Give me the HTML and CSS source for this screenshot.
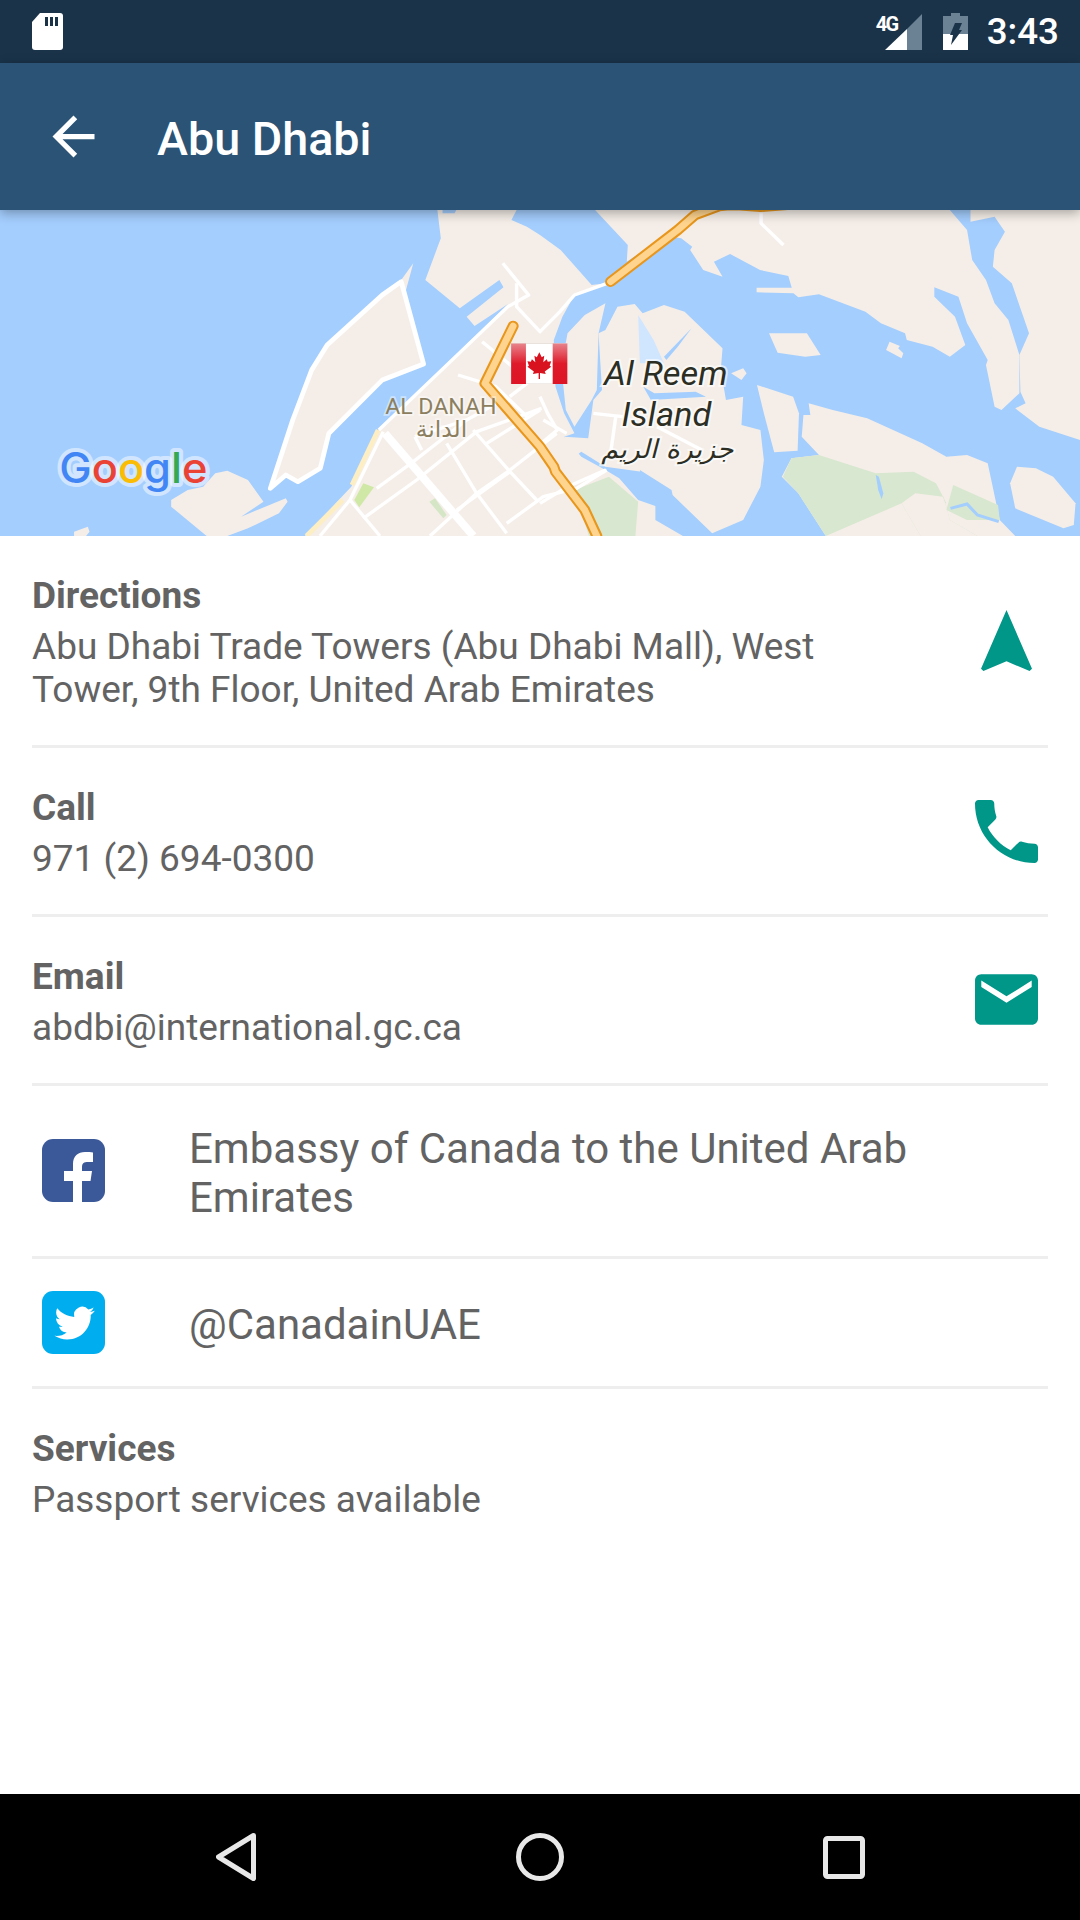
FILE: index.html
```html
<!DOCTYPE html>
<html lang="en">
<head>
<meta charset="utf-8">
<title>Abu Dhabi</title>
<link rel="stylesheet" href="styles.css">
</head>
<body>
<div class="statusbar">
  <svg class="sd" viewBox="0 0 31 37"><path fill="#fff" d="M8 0H28a3 3 0 0 1 3 3V34a3 3 0 0 1-3 3H3a3 3 0 0 1-3-3V9z"/><path fill="#1a3349" d="M13 4h3v9h-3zM18 4h3v9h-3zM23 4h3v9h-3z"/></svg>
  <div class="status-right">
    <div class="signal">
      <span class="net">4G</span>
      <svg class="signal-icon" viewBox="0 0 37 36"><path fill="#6b8194" d="M37 0V36H22V15z"/><path fill="#fff" d="M22 15V36H0z"/></svg>
    </div>
    <svg class="battery" viewBox="0 0 25 37"><path fill="#6b8194" d="M8 0h9v3h8V21H0V3h8z"/><path fill="#fff" d="M0 21H25V37H0z"/><path fill="#1a3349" d="M12 10h7l-3 7h3L8 32l2-10H7z"/></svg>
    <span class="clock">3:43</span>
  </div>
</div>
<header class="appbar">
  <svg class="back" viewBox="0 0 24 24"><path fill="#fff" d="M20 11H7.830l5.590-5.590L12 4l-8 8 8 8 1.410-1.410L7.830 13H20v-2z"/></svg>
  <h1 class="title">Abu Dhabi</h1>
</header>

<svg class="map" viewBox="0 30 3136 978" preserveAspectRatio="none">
  <rect class="water" x="0" y="0" width="3136" height="1008"/>
  <!-- mainland -->
  <polygon class="land" points="1270,30 1280,115 1235,240 1335,325 1450,240 1462,262 1355,350 1378,378 1475,312 1100,690 1020,860 885,1008 1983,1008 1903,960 1903,918 1853,900 1798,835 1758,810 1688,770 1638,710 1668,700 1638,640 1613,560 1608,420 1633,350 1668,285 1763,250 1718,255 1628,150 1568,105 1530,80 1485,60 1500,30 1325,30 1320,40 1285,40 1285,30"/>
  <polygon class="land" points="497,900 545,870 590,860 625,820 660,812 720,840 765,905 700,950 830,895 835,905 810,940 720,985 660,1008 600,1008 497,920"/>
  <polygon class="land" points="215,995 255,980 260,995 250,1008 215,1008"/>
  <polygon class="land" points="1728,30 1823,135 1820,185 1968,85 2008,30"/>
  <polygon class="land" points="1873,30 1948,110 1978,115 2010,140 2004,150 2042,210 2098,230 2073,185 2120,162 2207,210 2289,228 2299,263 2197,263 2197,277 2304,280 2318,292 2378,283 2513,335 2558,370 2628,400 2633,420 2708,440 2758,470 2803,435 2773,350 2713,290 2713,262 2783,290 2808,370 2868,480 2863,495 2888,620 2908,630 2960,580 2960,465 2928,360 2888,310 2863,240 2823,180 2808,90 2758,30"/>
  <polygon class="land" points="2818,30 2818,65 2888,50 2918,95 2888,150 2883,200 2938,250 2988,400 2960,465 2963,575 2978,610 2948,625 3018,680 3136,720 3136,30"/>
  <polygon class="land" points="2233,400 2343,400 2383,465 2338,470 2258,458"/>
  <polygon class="land" points="2583,425 2613,438 2608,445 2623,460 2618,475 2573,450"/>
  <polygon class="land" points="2198,555 2303,590 2320,640 2316,752 2248,757 2218,640"/>
  <polygon class="land" points="2348,610 2418,630 2518,655 2678,730 2748,770 2808,765 2868,790 2903,960 2948,1008 2398,1008 2318,880 2270,830 2298,775 2378,765 2328,710 2333,645 2353,645"/>
  <polygon class="land" points="2933,850 2953,800 3008,805 3058,830 3123,910 3118,975 3088,985 2948,925"/>
  <!-- Reem -->
  <polygon class="land" points="1698,345 1758,310 1738,400 1733,570 1718,600 1668,680 1643,630 1630,500 1648,400"/>
  <polygon class="land" points="1793,320 1843,312 1866,340 1928,315 1988,335 2098,445 2093,510 2108,600 2158,590 2153,675 2208,690 2218,780 2208,860 2158,960 2068,1000 1998,930 1953,885 1863,815 1758,800 1688,755 1668,770 1638,710 1708,715 1723,600 1748,570 1738,400 1758,390"/>
  <polygon class="lagoon" points="1853,345 1898,420 1928,490 1858,490"/>
  <polygon class="water" points="1928,470 2008,385 1968,440 1935,480"/>
  <polygon class="water" points="1868,560 1890,600 2050,590 2020,575 1900,580"/>
  <polygon class="land" points="2123,520 2158,505 2168,520 2153,540"/>
  <polygon class="water" points="1858,810 1950,870 1953,885 1938,885 1860,830"/>
  <!-- parks -->
  <polygon class="park" points="2273,830 2298,775 2378,765 2543,820 2653,815 2718,850 2748,910 2618,910 2658,880 2740,890 2758,960 2838,1008 2673,1008 2618,910 2398,1008 2318,880"/>
  <polygon class="land" points="2618,910 2658,880 2738,890 2748,920 2758,960 2838,1008 2673,1008"/>
  <polygon class="park" points="2748,930 2768,855 2898,915 2903,960 2808,960"/>
  <polygon class="water" points="2543,825 2552,830 2565,880 2560,898 2550,870"/>
  <polyline class="thin-water" points="2760,925 2808,912 2838,945 2900,965"/>
  <polygon class="park" points="1668,870 1768,830 1853,905 1845,1008 1710,1008"/>
  <!-- peninsula -->
  <polygon class="pen-tip" points="1165,240 1200,190 1175,285"/>
  <polygon class="peninsula" points="785,865 830,825 865,845 930,805 955,700 1110,540 1230,492 1165,245 1110,285 950,435 905,510 850,660"/>
  <!-- beach -->
  <polyline class="beach" points="1098,690 1022,855"/>
  <polyline class="beach" points="995,900 890,1008"/>
  <!-- upper roads -->
  <g class="road-thin">
    <polyline points="1100,690 1475,320 1535,285 1460,190"/>
    <polyline points="1500,250 1500,320 1568,395 1626,335 1668,285 1763,250"/>
    <polyline points="1400,425 1500,510"/>
    <polyline points="1330,525 1440,560 1530,650"/>
    <polyline points="1480,590 1568,520"/>
    <polyline points="1568,590 1590,640 1618,690 1560,740"/>
    <polyline points="1723,640 1808,650"/>
    <polyline points="1788,650 1773,760"/>
    <polyline points="1908,680 2038,750"/>
    <polyline points="1568,910 1648,860 1758,810"/>
    <polyline points="2210,40 2210,70 2275,135"/>
  </g>
  <!-- streets, drawn from the lower crop -->
  <g transform="translate(871 600) scale(.968 1)">
    <polygon class="park-bright" points="190,250 222,262 178,322 163,300"/>
    <polygon class="park-pale" points="388,305 405,295 440,345 430,355"/>
    <g class="road-thin">
      <polyline points="230,265 340,185 500,60 590,10"/>
      <polyline points="190,355 350,240 530,95 725,25"/>
      <polyline points="390,408 530,280 630,210 770,100"/>
      <polyline points="560,130 720,30"/>
      <polyline points="620,370 730,290 830,265 920,210"/>
      <polyline points="470,330 630,215"/>
      <polyline points="345,110 365,150"/>
      <polyline points="440,130 530,280 620,400"/>
      <polyline points="520,90 630,215 710,300"/>
      <polyline points="150,300 240,408"/>
      <polyline points="250,95 150,300 60,408"/>
      <polyline points="345,110 500,60"/>
      <polyline points="730,60 800,100"/>
    </g>
    <polyline class="road-wide" points="255,100 520,408"/>
  </g>
  <!-- motorway -->
  <polyline class="mway-o" points="1490,378 1408,550 1568,740 1608,800 1613,815 1698,930 1733,1008"/>
  <polyline class="mway-i" points="1490,378 1408,550 1568,740 1608,800 1613,815 1698,930 1733,1008"/>
  <polyline class="mway-o" points="1773,245 1968,90 2018,45 2088,18 2128,14 2208,20 2288,14"/>
  <polyline class="mway-i" points="1773,245 1968,90 2018,45 2088,18 2128,14 2208,20 2288,14"/>
  <!-- labels -->
  <text class="lbl-area" x="1280" y="642">AL DANAH</text>
  <text class="lbl-area-ar" x="1282" y="712">الدانة</text>
  <text class="lbl-isl" x="1933" y="555">Al Reem</text>
  <text class="lbl-isl" x="1935" y="677">Island</text>
  <text class="lbl-isl-ar" x="1938" y="775">جزيرة الريم</text>
  <text class="logo" x="172" y="850"><tspan class="g-b">G</tspan><tspan class="g-r">o</tspan><tspan class="g-y">o</tspan><tspan class="g-b">g</tspan><tspan class="g-g">l</tspan><tspan class="g-r">e</tspan></text>
  <!-- flag -->
  <svg x="1484" y="430" width="164" height="122" viewBox="0 0 57 41" preserveAspectRatio="none">
    <defs><linearGradient id="fl" x1="0" y1="0" x2="0" y2="1"><stop offset="0" stop-color="#e8848c"/><stop offset=".5" stop-color="#df1a2a"/><stop offset="1" stop-color="#dd1425"/></linearGradient></defs>
    <rect width="57" height="41" fill="#fff" stroke="#d9cfc9" stroke-width=".8"/>
    <rect width="15" height="41" fill="url(#fl)"/>
    <rect x="42" width="15" height="41" fill="url(#fl)"/>
    <polygon fill="#d8121f" points="28.500,9 31,14 33.500,12.500 32.500,19 36,16 37,18.500 40.500,18 39,22.500 40.500,23.500 34,28.500 35,31 29.200,30 29.200,36 27.800,36 27.800,30 22,31 23,28.500 16.500,23.500 18,22.500 16.500,18 20,18.500 21,16 24.500,19 23.500,12.500 26,14"/>
  </svg>
</svg>

<main class="content">
  <section class="row row-first">
    <div class="text">
      <div class="label">Directions</div>
      <div class="value">Abu Dhabi Trade Towers (Abu Dhabi Mall), West<br>Tower, 9th Floor, United Arab Emirates</div>
    </div>
    <div class="action"><svg class="ic-nav" viewBox="4.500 2 15 19" preserveAspectRatio="none"><path fill="#009688" d="M12 2 4.500 20.290l.71.71L12 18l6.790 3 .71-.71z"/></svg></div>
  </section>
  <section class="row">
    <div class="text">
      <div class="label">Call</div>
      <div class="value">971 (2) 694-0300</div>
    </div>
    <div class="action"><svg class="ic-call" viewBox="3 3 18 18"><path fill="#009688" d="M6.620 10.790c1.440 2.830 3.760 5.140 6.590 6.590l2.200-2.200c.27-.27.67-.36 1.020-.24 1.120.37 2.330.57 3.570.57.55 0 1 .45 1 1V20c0 .55-.45 1-1 1-9.390 0-17-7.610-17-17 0-.55.45-1 1-1h3.500c.55 0 1 .45 1 1 0 1.250.2 2.450.57 3.570.11.35.03.74-.25 1.020l-2.200 2.200z"/></svg></div>
  </section>
  <section class="row">
    <div class="text">
      <div class="label">Email</div>
      <div class="value">abdbi@international.gc.ca</div>
    </div>
    <div class="action"><svg class="ic-mail" viewBox="2 4 20 16"><path fill="#009688" d="M20 4H4c-1.100 0-1.990.9-1.990 2L2 18c0 1.100.9 2 2 2h16c1.100 0 2-.9 2-2V6c0-1.100-.9-2-2-2zm0 4-8 5-8-5V6l8 5 8-5v2z"/></svg></div>
  </section>
  <section class="row row-social row-fb">
    <div class="social">
      <svg class="ic-social" viewBox="0 0 63 63"><rect width="63" height="63" rx="11" fill="#3b5998"/><path fill="#fff" d="M31 63V42H22V32H31V25C31 17 36 13 43 13C46 13 49 13 51 13.500V23H46C42 23 40 24 40 28V32H50L48.500 42H40V63Z"/></svg>
    </div>
    <div class="social-text">Embassy of Canada to the United Arab Emirates</div>
  </section>
  <section class="row row-social row-tw">
    <div class="social">
      <svg class="ic-social" viewBox="0 0 63 63"><rect width="63" height="63" rx="11" fill="#00aeef"/><path transform="translate(12.500 12) scale(1.680)" fill="#fff" d="M23.953 4.570a10 10 0 0 1-2.825.775 4.958 4.958 0 0 0 2.163-2.723c-.951.555-2.005.959-3.127 1.184a4.920 4.920 0 0 0-8.384 4.482C7.690 8.095 4.067 6.130 1.640 3.162a4.822 4.822 0 0 0-.666 2.475c0 1.710.87 3.213 2.188 4.096a4.904 4.904 0 0 1-2.228-.616v.06a4.923 4.923 0 0 0 3.946 4.827 4.996 4.996 0 0 1-2.212.085 4.936 4.936 0 0 0 4.604 3.417 9.867 9.867 0 0 1-6.102 2.105c-.39 0-.779-.023-1.170-.067a13.995 13.995 0 0 0 7.557 2.209c9.053 0 13.998-7.496 13.998-13.985 0-.21 0-.42-.015-.63A9.935 9.935 0 0 0 24 4.590z"/></svg>
    </div>
    <div class="social-text">@CanadainUAE</div>
  </section>
  <section class="row row-last">
    <div class="text">
      <div class="label">Services</div>
      <div class="value">Passport services available</div>
    </div>
  </section>
</main>

<nav class="navbar">
  <svg class="nav-back" viewBox="0 0 40 48"><path d="M37.500 2.500 2.500 24l35 21.500z"/></svg>
  <svg class="nav-home" viewBox="0 0 48 48"><circle cx="24" cy="24" r="21.500"/></svg>
  <svg class="nav-recent" viewBox="0 0 42 43"><rect x="2.500" y="2.500" width="37" height="38" rx="2"/></svg>
</nav>
</body>
</html>
```

FILE: styles.css
```css
* { box-sizing: border-box; }
html, body { margin: 0; padding: 0; }
body {
  width: 1080px;
  height: 1920px;
  display: flex;
  flex-direction: column;
  background: #fff;
  font-family: Roboto, "Noto Sans", sans-serif;
  color: #636363;
  overflow: hidden;
}
svg { display: block; flex: none; }

.statusbar {
  height: 63px;
  flex: none;
  background: #1a3349;
  display: flex;
  align-items: center;
  justify-content: space-between;
  padding: 0 21px 0 32px;
  color: #fff;
}
.sd { width: 31px; height: 37px; }
.status-right { display: flex; align-items: center; }
.signal { position: relative; width: 37px; height: 36px; margin-right: 21px; }
.signal-icon { width: 37px; height: 36px; }
.net {
  position: absolute;
  left: -9px;
  top: 0;
  font-size: 20px;
  line-height: 20px;
  font-weight: 700;
  letter-spacing: -1.5px;
}
.battery { width: 25px; height: 37px; margin-right: 19px; }
.clock { font-size: 36.750px; font-weight: 500; line-height: 43px; }

.appbar {
  height: 147px;
  flex: none;
  background: #2a5376;
  display: flex;
  align-items: center;
  padding-left: 42px;
  gap: 52px;
  position: relative;
  z-index: 2;
  box-shadow: 0 3px 11px rgba(0, 0, 0, .32);
}
.back { width: 63px; height: 63px; }
.title { margin: 4px 0 0; font-size: 46.700px; font-weight: 500; color: #fff; line-height: 56px; }

.map { width: 1080px; height: 326px; flex: none; }
.water { fill: #a4cefe; }
.land { fill: #f5eee8; }
.lagoon { fill: #d0e6ff; }
.park { fill: #d8e7cf; }
.park-bright { fill: #cfe8a6; }
.park-pale { fill: #d5e6c6; }
.pen-tip { fill: #f5eee8; }
.peninsula { fill: #f5eee8; stroke: #fff; stroke-width: 14; stroke-linejoin: round; }
.beach { fill: none; stroke: #fdeec4; stroke-width: 14; }
.thin-water { fill: none; stroke: #a4cefe; stroke-width: 9; }
.road-thin polyline { fill: none; stroke: #fff; stroke-width: 10; stroke-linejoin: round; }
.road-wide { fill: none; stroke: #fff; stroke-width: 24; }
.mway-o { fill: none; stroke: #e8961c; stroke-width: 32; stroke-linecap: round; stroke-linejoin: round; }
.mway-i { fill: none; stroke: #fed48f; stroke-width: 20; stroke-linecap: round; stroke-linejoin: round; }

.lbl-area, .lbl-area-ar {
  fill: #8c7f60;
  text-anchor: middle;
  paint-order: stroke;
  stroke: rgba(255, 255, 255, .45);
  stroke-width: 10;
}
.lbl-area { font-size: 67px; font-family: Roboto, sans-serif; }
.lbl-area-ar { font-size: 68px; font-family: "DejaVu Sans", sans-serif; }
.lbl-isl, .lbl-isl-ar {
  fill: #2c2e24;
  text-anchor: middle;
  paint-order: stroke;
  stroke: rgba(255, 255, 255, .6);
  stroke-width: 12;
  font-style: italic;
}
.lbl-isl { font-size: 100px; font-family: Roboto, sans-serif; }
.lbl-isl-ar { font-size: 78px; font-family: "DejaVu Sans", sans-serif; }

.logo {
  font-family: Inter, Roboto, sans-serif;
  font-size: 126px;
  font-weight: 500;
  paint-order: stroke;
  stroke: rgba(255, 255, 255, .5);
  stroke-width: 24;
  stroke-linejoin: round;
}
.g-b { fill: #4285f4; }
.g-r { fill: #ea4335; }
.g-y { fill: #fbbc05; }
.g-g { fill: #34a853; }

.content { flex: 1; padding: 0 32px; display: flex; flex-direction: column; }
.row {
  display: flex;
  align-items: center;
  padding: 38px 0 34px;
  border-bottom: 3px solid #eee;
}
.row-last { border-bottom: 0; }
.text { flex: 1; min-width: 0; }
.label { font-size: 37px; line-height: 43px; font-weight: 700; margin-bottom: 8px; }
.value { font-size: 37px; line-height: 43px; }
.action { width: 84px; height: 84px; display: flex; align-items: center; justify-content: center; margin-top: -4px; }
.ic-nav { width: 51px; height: 61px; }
.ic-call { width: 63px; height: 63px; }
.ic-mail { width: 63px; height: 51px; margin-top: -2px; }

.row-social { gap: 74px; padding: 36px 0; }
.row-tw { padding: 32px 0; }
.social { width: 83px; display: flex; justify-content: center; margin-top: -1px; }
.row-tw .social { margin-top: 0; }
.ic-social { width: 63px; height: 63px; }
.social-text { flex: 1; font-size: 42px; line-height: 49px; position: relative; top: 2px; }

.navbar {
  height: 126px;
  flex: none;
  background: #000;
  display: flex;
  align-items: center;
  padding-left: 216px;
  fill: none;
  stroke: #e8e8e8;
  stroke-width: 5;
  stroke-linejoin: round;
}
.nav-back { width: 40px; height: 48px; margin-right: 260px; }
.nav-home { width: 48px; height: 48px; margin-right: 259px; }
.nav-recent { width: 42px; height: 43px; }
```
